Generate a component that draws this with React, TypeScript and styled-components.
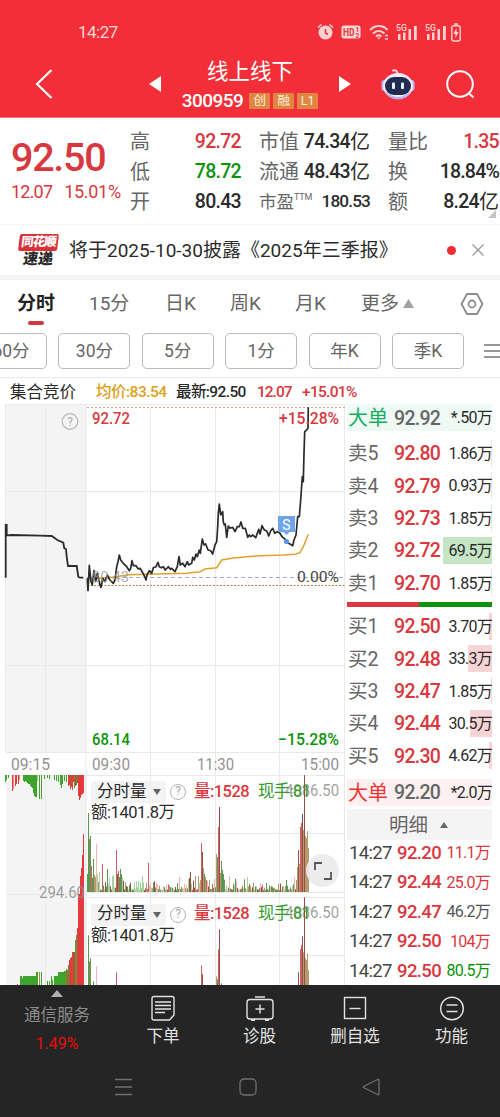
import React from 'react';
import styled, { createGlobalStyle } from 'styled-components';

const RED = '#d8383e';
const GREEN = '#0b930b';
const INK = '#2b2b2b';
const GREY = '#666';
const SANS = 'Roboto, "Noto Sans CJK SC", sans-serif';

const Global = createGlobalStyle`
  * { box-sizing: border-box; }
  html, body { margin: 0; padding: 0; background: #fff; }
  body { font-family: ${SANS}; color: ${INK}; width: 500px; overflow: hidden; }
`;

const T = styled.span<{ $s?: number; $c?: string; $w?: number; $ls?: number }>`
  display: inline-block;
  white-space: nowrap;
  line-height: 1;
  font-size: ${(p) => p.$s ?? 20}px;
  color: ${(p) => p.$c ?? INK};
  font-weight: ${(p) => p.$w ?? 400};
  letter-spacing: ${(p) => p.$ls ?? 0}px;
`;

const Page = styled.main`
  width: 500px;
  height: 1117px;
  display: flex;
  flex-direction: column;
  overflow: hidden;
`;

/* ---------- header ---------- */
const Header = styled.header`
  height: 118px;
  flex: none;
  background: #f22f38;
  border-bottom: 1px solid #e9747a;
`;
const StatusBar = styled.div`
  height: 54px;
  padding: 10px 39px 0 78px;
  display: flex;
  align-items: center;
  justify-content: space-between;
`;
const TitleBar = styled.div`
  height: 63px;
  display: grid;
  grid-template-columns: 140px 30px 160px 30px 140px;
  align-items: center;
`;
const BackCell = styled.div`padding: 0 0 4px 35px; display: flex;`;
const ArrowCell = styled.div`display: flex; justify-content: center; padding-bottom: 3px;`;
const StockName = styled.div`
  display: flex;
  flex-direction: column;
  align-items: center;
  gap: 10px;
  padding-bottom: 1px;
`;
const CodeRow = styled.div`display: flex; align-items: center; gap: 3px; height: 16px;`;
const Code = styled(T)`margin-right: 3px;`;
const Badge = styled.span`
  width: 21px;
  height: 16px;
  border-radius: 1px;
  background: #df8742;
  color: #fff0dc;
  font-size: 12.5px;
  line-height: 16px;
  text-align: center;
`;
const Actions = styled.div`
  display: flex;
  align-items: center;
  gap: 30px;
  padding: 0 0 4px 21px;
`;

/* ---------- quote ---------- */
const Quote = styled.section`
  height: 107px;
  flex: none;
  display: grid;
  grid-template-columns: 130px 111px 18px 111px 18px 111px;
  border-bottom: 1px solid #f3f3f3;
  position: relative;
`;
const Main = styled.div`padding: 20px 0 0 11px;`;
const Changes = styled.div`display: flex; gap: 12px; margin-top: 5px;`;
const StatCol = styled.div`padding-top: 9px;`;
const Stat = styled.div`
  height: 30px;
  display: flex;
  align-items: center;
  justify-content: space-between;
`;
const Value = styled.span`display: flex; align-items: center;`;
const Sup = styled.sup`font-size: 9px; line-height: 1; vertical-align: 8px; letter-spacing: -0.2px;`;
const Corner = styled.i`
  position: absolute;
  right: 4px;
  bottom: 6px;
  border-left: 8px solid transparent;
  border-bottom: 8px solid #c4c4c4;
`;

/* ---------- news ---------- */
const News = styled.section`
  height: 55px;
  flex: none;
  display: flex;
  align-items: center;
  padding: 0 16px 0 17px;
  border-bottom: 5px solid #f4f4f4;
`;
const NewsLogo = styled.div`
  width: 42px;
  margin-right: 10px;
  display: flex;
  flex-direction: column;
  align-items: center;
`;
const LogoTop = styled.div`
  width: 39px;
  height: 17px;
  background: #dc3038;
  border-radius: 2px;
  transform: skewX(-7deg);
  color: #fff;
  font-size: 12.5px;
  font-weight: 900;
  line-height: 16px;
  text-align: center;
  letter-spacing: -1px;
`;
const LogoBottom = styled.div`
  font-size: 15px;
  font-weight: 900;
  line-height: 16px;
  transform: skewX(-7deg);
`;
const Dot = styled.i`width: 9px; height: 9px; border-radius: 50%; background: #ee2b30; margin: 0 16px 0 auto;`;

/* ---------- tabs ---------- */
const Tabs = styled.nav`
  height: 47px;
  flex: none;
  padding-left: 17px;
  display: grid;
  grid-template-columns: 72px 76px 65px 65px 66px 99px 24px;
  align-items: center;
`;
const Tab = styled.div<{ $on?: boolean }>`
  position: relative;
  display: flex;
  align-items: center;
  gap: 4px;
  font-size: 19px;
  line-height: 24px;
  font-weight: ${(p) => (p.$on ? 700 : 400)};
  color: ${(p) => (p.$on ? '#222' : '#666')};
  white-space: nowrap;
  &::after {
    content: '';
    display: ${(p) => (p.$on ? 'block' : 'none')};
    position: absolute;
    left: 11px;
    top: 29px;
    width: 16px;
    height: 4px;
    border-radius: 2px;
    background: #d2373d;
  }
`;
const Pills = styled.div`
  height: 51px;
  flex: none;
  display: flex;
  align-items: center;
  padding: 0 0 3px;
  gap: 11.4px;
  margin-left: -25px;
  border-bottom: 1px solid #e8e8e8;
`;
const Pill = styled.div`
  width: 72px;
  height: 36px;
  flex: none;
  border: 1px solid #b9b9b9;
  border-radius: 5px;
  color: #666;
  font-size: 17.5px;
  line-height: 35px;
  text-align: center;
`;
const MenuIcon = styled.svg`flex: none; margin-left: 8px;`;
const Info = styled.div`
  height: 26px;
  flex: none;
  padding: 4px 0 0 10px;
  display: grid;
  grid-template-columns: 86px 80px 81px 45px auto;
  align-items: center;
`;

/* ---------- body ---------- */
const Body = styled.section`
  height: 581px;
  flex: none;
  display: flex;
  overflow: hidden;
`;
const ChartArea = styled.div`position: relative; width: 345px; height: 581px; flex: none; overflow: hidden;`;
const VolumeHead = styled.div<{ $top: number }>`
  position: absolute;
  left: 91px;
  top: ${(p) => p.$top}px;
`;
const VolumeRow = styled.div`display: flex; align-items: center; height: 22px;`;
const Picker = styled.div`
  width: 75px;
  height: 22px;
  padding-left: 6px;
  display: flex;
  align-items: center;
  gap: 6px;
  background: rgba(242, 242, 242, .9);
  border-radius: 3px;
  margin-right: 4px;
`;
const Help = styled.i`
  width: 16px;
  height: 16px;
  border: 1.4px solid #b3b3b3;
  border-radius: 50%;
  color: #aaa;
  font: normal 12px/13px Roboto, sans-serif;
  text-align: center;
  margin-right: 8px;
`;
const Current = styled(T)`margin-left: 9px;`;
const Expand = styled.div`
  position: absolute;
  left: 306px;
  top: 450px;
  width: 33px;
  height: 33px;
  border-radius: 50%;
  background: rgba(235, 235, 235, .93);
  display: flex;
  align-items: center;
  justify-content: center;
`;

const Book = styled.aside`
  width: 147px;
  padding-left: 2px;
  display: flex;
  flex-direction: column;
`;
const BookRow = styled.div<{ $h: number; $bg?: string; $bar?: number; $barColor?: string }>`
  height: ${(p) => p.$h}px;
  flex: none;
  display: grid;
  grid-template-columns: 46px 48px 1fr;
  align-items: center;
  padding: 1.500px 0 0 1px;
  background: ${(p) =>
    p.$bar
      ? `linear-gradient(${p.$barColor}, ${p.$barColor}) right center / ${p.$bar}px 27px no-repeat`
      : p.$bg ?? 'transparent'};
`;
const Amount = styled(T)`justify-self: end;`;
const Side = styled.div<{ $top: number; $bottom: number }>`
  flex: none;
  padding: ${(p) => p.$top}px 0 ${(p) => p.$bottom}px;
`;
const Ratio = styled.div`
  height: 5px;
  flex: none;
  background: linear-gradient(90deg, #d8383e 49.5%, #0b930b 49.5%);
`;
const DetailHead = styled.div`
  height: 31px;
  flex: none;
  margin-top: 3px;
  padding: 2px 2px 0 0;
  background: #f4f4f4;
  display: flex;
  align-items: center;
  justify-content: center;
  gap: 12px;
`;
const Tick = styled.div`
  height: 29.5px;
  flex: none;
  display: grid;
  grid-template-columns: 48px 46px 1fr;
  align-items: center;
  padding: 0 2px 3px 2px;
`;

/* ---------- footer ---------- */
const Footer = styled.footer`height: 132px; flex: none; background: #252525; position: relative;`;
const Menu = styled.div`
  height: 74px;
  display: grid;
  grid-template-columns: 114px 98px 95px 96px 97px;
`;
const MenuItem = styled.div<{ $gap: number; $top: number }>`
  display: flex;
  flex-direction: column;
  align-items: center;
  padding-top: ${(p) => p.$top}px;
  gap: ${(p) => p.$gap}px;
`;
const SystemNav = styled.div`
  height: 54px;
  display: flex;
  justify-content: space-between;
  align-items: center;
  padding: 1px 120px 0 114px;
`;

const SignalIcon = () => (
  <svg width="22" height="18" viewBox="0 0 22 18" fill="#fbd3d2">
    <text x="0" y="7.500" fontSize="9" fontWeight="500" fontFamily="Roboto" textLength="11" lengthAdjust="spacingAndGlyphs">5G</text>
    <path d="M2 11h2.500v6H2zM7 9.500h2.500v7.500H7zM12.500 6H15v11h-2.500zM18 3h2.800v14H18z" />
  </svg>
);

const StatusIcons = styled.div`display: flex; align-items: center;`;
const Gap = styled.span<{ $w: number }>`width: ${(p) => p.$w}px;`;

const Status = () => (
  <StatusBar>
    <T $s={17} $c="#fcd5d4" $ls={-0.5}>14:27</T>
    <StatusIcons>
      <svg width="17" height="18" viewBox="0 0 17 18">
        <circle cx="8.500" cy="9.500" r="7" fill="#fbd3d2" />
        <path d="M1 4.500 4.500 1.500M16 4.500 12.500 1.500" stroke="#fbd3d2" strokeWidth="1.500" />
        <path d="M8.500 6v4l2.500 1.500" stroke="#f22f38" strokeWidth="1.500" fill="none" />
      </svg>
      <Gap $w={7} />
      <svg width="20" height="14" viewBox="0 0 20 14">
        <rect x=".5" y=".5" width="19" height="13" rx="2" fill="#fbd3d2" />
        <text x="2" y="11" fontSize="10.500" fontWeight="700" fill="#e93840" fontFamily="Roboto" textLength="11.500" lengthAdjust="spacingAndGlyphs">HD</text>
        <text x="14.500" y="6.800" fontSize="6.500" fontWeight="700" fill="#e93840" fontFamily="Roboto">1</text>
        <text x="14.500" y="12.500" fontSize="6.500" fontWeight="700" fill="#e93840" fontFamily="Roboto">2</text>
      </svg>
      <Gap $w={8} />
      <svg width="20" height="17" viewBox="0 0 20 17" fill="none" stroke="#fbd3d2" strokeWidth="2">
        <path d="M1 6C6 .5 14 .5 18.500 6M4 9.500c3.500-3.500 8-3.500 11.500 0M7 12.500c2-1.700 3.500-1.700 5.500 0" />
        <path d="m8 13.500 1.800 2 1.800-2z" fill="#fbd3d2" stroke="none" />
        <path d="M16 11.500h3M16 15h3" strokeWidth="1.500" />
      </svg>
      <Gap $w={7} /><SignalIcon /><Gap $w={7} /><SignalIcon /><Gap $w={4} />
      <svg width="10" height="19" viewBox="0 0 10 19" fill="none" stroke="#fbd3d2" strokeWidth="1.400">
        <path d="M3 1h4" /><rect x=".8" y="2.800" width="8.400" height="15.200" rx="2" />
        <path d="M5.500 5 2.500 11h2v4l3-6h-2z" fill="#fbd3d2" stroke="none" />
      </svg>
    </StatusIcons>
  </StatusBar>
);

const Robot = () => (
  <svg width="34" height="32" viewBox="0 0 34 32">
    <path d="M12 2.500q4-1 4.500 3" stroke="#f6d7ef" strokeWidth="2" fill="none" strokeLinecap="round" />
    <rect x="0.500" y="12" width="6" height="11" rx="3" fill="#b8b6f2" />
    <rect x="27.500" y="12" width="6" height="11" rx="3" fill="#b8b6f2" />
    <ellipse cx="17" cy="18" rx="15" ry="13" fill="#eeeaff" />
    <path d="M4 23q13 12 26 0-4 8.500-13 8.500T4 23" fill="#b9aff2" />
    <rect x="4" y="9" width="26" height="18" rx="9" fill="#202d50" />
    <rect x="11" y="14.500" width="3" height="6.500" rx="1" fill="#e6f3ff" />
    <rect x="20" y="14.500" width="3" height="6.500" rx="1" fill="#e6f3ff" />
  </svg>
);

/* ---------- chart data ---------- */
type P = [number, number];
const line = (pts: P[]) => pts.map(([x, y]) => `${(x / 3).toFixed(1)},${(400 + y / 3).toFixed(1)}`).join(' ');

const auction: P[] = [[17, 533], [17, 375], [20, 375], [20, 406], [35, 405], [120, 407], [155, 408], [165, 415], [172, 420], [190, 428], [193, 445], [198, 447], [200, 470], [204, 498], [230, 498], [235, 530], [240, 533], [250, 533]];
const price: P[] = [[262, 535], [264, 572], [268, 496], [273, 545], [277, 555], [282, 512], [287, 545], [292, 520], [300, 555], [303, 562], [308, 535], [315, 545], [322, 525], [330, 540], [340, 550], [345, 540], [350, 500], [354, 485], [358, 465], [362, 480], [370, 490], [380, 500], [388, 512], [392, 505], [396, 482], [400, 497], [408, 497], [415, 507], [420, 505], [428, 518], [434, 530], [438, 540], [441, 525], [448, 512], [455, 520], [460, 503], [468, 500], [474, 487], [478, 500], [484, 503], [490, 500], [496, 510], [505, 500], [511, 508], [515, 505], [525, 515], [532, 500], [537, 470], [541, 495], [548, 490], [555, 500], [562, 485], [566, 495], [575, 490], [578, 472], [583, 480], [588, 462], [592, 470], [598, 450], [601, 460], [607, 417], [612, 435], [617, 432], [624, 450], [632, 452], [638, 462], [645, 435], [650, 425], [653, 380], [655, 340], [658, 312], [662, 345], [668, 335], [670, 365], [673, 375], [676, 372], [680, 412], [685, 378], [690, 385], [698, 382], [705, 395], [712, 380], [718, 380], [723, 366], [728, 385], [736, 385], [743, 412], [748, 405], [752, 410], [758, 405], [767, 413], [776, 388], [780, 402], [786, 377], [793, 390], [800, 393], [806, 408], [812, 392], [818, 385], [824, 400], [832, 395], [840, 400], [846, 410], [858, 420], [866, 430], [878, 437], [882, 420], [888, 405], [893, 350], [898, 350], [902, 300], [907, 230], [910, 245], [912, 160], [914, 95], [918, 92], [924, 85], [925, 22]];
const average: P[] = [[265, 537], [300, 535], [350, 530], [385, 524], [500, 521], [560, 520], [600, 515], [615, 507], [650, 503], [665, 480], [700, 474], [780, 467], [850, 465], [885, 463], [900, 458], [910, 440], [925, 403]];

const R = '#c96363', G = '#519a50', O = '#719052', B = '#b69a6c', K = '#f3b4ae', L = '#a2d5a0', D = '#934f45';
type Bar = [number, number, string];
const spikes: Bar[] = [[87.5, 18, G], [88.5, 79, G], [89.5, 53, O], [90.5, 56, O], [91.5, 26, R], [92.5, 14, O], [93.5, 33, G], [94.5, 17, B], [95.5, 15, B], [96.5, 48, K], [97.5, 18, L], [98.5, 10, B], [99.5, 20, L], [102.5, 28, R], [107.5, 23, G], [112.5, 16, L], [116.5, 42, R], [117.5, 18, D], [118.5, 21, R], [119.5, 15, G], [120.5, 23, G], [121.5, 18, G], [142.5, 16, L], [148.5, 29, R], [150.5, 9, K], [179.5, 15, K], [190.5, 20, D], [195.5, 16, B], [198.5, 16, B], [200.5, 12, B], [201.5, 49, R], [202.5, 40, D], [203.5, 24, B], [204.5, 18, G], [205.5, 15, B], [206.5, 12, R], [216.5, 38, B], [217.5, 35, O], [218.5, 65, R], [219.5, 85, D], [220.5, 19, B], [221.5, 31, O], [222.5, 22, G], [223.5, 18, G], [229.5, 16, K], [247.5, 15, L], [286.5, 12, G], [294.5, 15, K], [296.5, 12, B], [297.5, 25, B], [298.5, 42, D], [299.5, 28, B], [300.5, 65, R], [301.5, 69, R], [302.5, 78, D], [303.5, 62, B], [304.5, 117, D], [305.5, 56, B], [306.5, 54, B], [307.5, 61, B], [308.5, 44, B]];
const palette = [G, L, R, K, B, D, O, L];
const volume: Bar[] = (() => {
  const known = new Map(spikes.map((b) => [b[0], b]));
  const out: Bar[] = [];
  let seed = 31;
  for (let x = 87.5; x < 309; x += 1) {
    seed = (seed * 1103 + 12345) % 65521;
    const r = seed / 65521;
    const base = x < 125 ? 13 : x < 155 ? 9 : x < 188 ? 6 : x < 250 ? 10 : 6;
    out.push(known.get(x) ?? [x, 2 + r * r * base * 1.2, palette[seed % palette.length]]);
  }
  return out;
})();

const V = ({ base }: { base: number }) => (
  <g>{volume.map(([x, h, c]) => <rect key={x} x={x - 0.5} y={base - h} width="1" height={h} fill={c} />)}</g>
);

const AR = '#e33b3d', AG = '#3fa32c';
const hanging: Bar[] = [[5, 7, AG], [6, 5, AG], [8, 3, AG], [12, 16, AR], [13, 14, '#e88'], [15, 11, AR], [16, 9, AR], [18, 9, AR], [19, 5, '#e88'], [23, 6, AG], [24, 7, AG], [25, 6, AG], [26, 7, AG], [27, 8, AG], [28, 9, AG], [29, 9, AG], [30, 11, AG], [31, 12, AG], [32, 13, AG], [33, 18, AG], [34, 21, AG], [35, 22, AG], [36, 22, AG], [37, 6, '#9c9'], [39, 24, AG], [41, 24, AG], [44, 4, AG], [47, 3, AG], [49, 4, AG], [54, 5, AG], [56, 6, AG], [58, 7, AG], [60, 10, AG], [61, 13, AG], [62, 9, AG], [64, 6, AG], [66, 7, AG], [68, 11, AR], [69, 10, AR], [70, 14, AR], [71, 12, '#8a6b2f'], [72, 15, AR], [73, 7, AR], [74, 13, AG], [75, 11, AR], [76, 10, AG], [77, 8, AR], [78, 21, AR], [79, 25, AR], [80, 23, AR], [81, 20, AR], [82, 19, AR], [83, 18, AR]];
const rising: Bar[] = [[17, 1, AR], [20, 9, AG], [21, 9, AG], [22, 7, AG], [23, 9, AG], [24, 9, AG], [25, 9, AG], [26, 9, AG], [27, 9, AG], [28, 9, AG], [29, 9, AG], [30, 9, AG], [31, 9, AG], [32, 9, AG], [33, 9, AG], [34, 9, AG], [35, 9, AG], [36, 13, AG], [37, 13, AG], [39, 13, '#9a8a50'], [41, 13, AG], [47, 4, AG], [49, 4, AG], [51, 9, AG], [52, 5, AG], [54, 9, AG], [55, 9, AG], [56, 9, AG], [57, 9, AG], [58, 13, AG], [59, 13, AG], [60, 13, AG], [61, 13, AG], [62, 13, AG], [63, 13, AG], [64, 14, AG], [65, 14, AG], [66, 16, AG], [67, 15, AR], [68, 20, AG], [69, 25, AR], [70, 27, AR], [71, 28, AR], [72, 33, AR], [73, 33, '#98602c'], [74, 33, AR], [75, 45, AG], [76, 50, '#75913b'], [77, 57, AR], [78, 91, AR], [79, 91, AR], [80, 109, AR], [81, 117, AR], [82, 130, AR], [83, 151, AR]];

const Chart = () => (
  <svg width="345" height="581" viewBox="0 404 345 581" fontFamily={SANS}>
    <rect x="6" y="404" width="80.500" height="348" fill="#f4f4f4" />
    <rect x="6" y="775" width="80.500" height="210" fill="#f4f4f4" />
    <g stroke="#e9e9e9" fill="none">
      <path d="M6 404.500H345M6 491.500H345M6 665.500H345M6 752.500H345M5.500 404V752M45.500 404V752M86 404V985M150.500 404V985M215.500 404V985M279.500 404V985M344.500 404V985" />
      <path d="M6 775.500H345M87 833.500H345M6 894.500H86M87 892.500H345M87 897.500H345M87 955.500H345M45.500 775V985" />
    </g>
    <path d="M87 407.500H345" stroke="#dda38a" strokeDasharray="2 2" />
    <path d="M87 577.500H345" stroke="#aaa" strokeDasharray="4 3" />
    <path d="M87 585.500H345" stroke="#c07a3a" strokeDasharray="2 1.500" />
    <text x="297" y="581.500" fontSize="15.500" fill="#444" textLength="42" lengthAdjust="spacingAndGlyphs">0.00%</text>
    <polyline points={line(auction)} fill="none" stroke="#2b2b2b" strokeWidth="1.800" />
    <polyline points={line(average)} fill="none" stroke="#dda32b" strokeWidth="1.500" />
    <polyline points={line(price)} fill="none" stroke="#2b2b2b" strokeWidth="1.700" strokeLinejoin="round" />
    <text x="92" y="582" fontSize="15.500" fill="#999" fillOpacity=".8" textLength="37" lengthAdjust="spacingAndGlyphs">80.43</text>
    <circle cx="286.500" cy="541.500" r="2.600" fill="#5b94e8" />
    <path d="M278 516h17v16h-5.500l-3 3-3-3H278z" fill="#70a4ea" />
    <text x="286.500" y="529.500" fontSize="14" fill="#fff" textAnchor="middle">S</text>
    <circle cx="70" cy="421.500" r="7.800" fill="none" stroke="#b9b9b9" strokeWidth="1.200" />
    <text x="70" y="426" fontSize="12" fill="#aaa" textAnchor="middle">?</text>
    <g fontSize="16.500" fontWeight="500">
      <text x="92" y="424" fill={RED} textLength="38" lengthAdjust="spacingAndGlyphs">92.72</text>
      <text x="279" y="424" fill={RED} textLength="60" lengthAdjust="spacingAndGlyphs">+15.28%</text>
      <text x="92" y="744.500" fill={GREEN} textLength="38" lengthAdjust="spacingAndGlyphs">68.14</text>
      <text x="278" y="744.500" fill={GREEN} textLength="61" lengthAdjust="spacingAndGlyphs">−15.28%</text>
    </g>
    <g fontSize="16.500" fill="#929292">
      <text x="11" y="770" textLength="39" lengthAdjust="spacingAndGlyphs">09:15</text>
      <text x="92" y="770" textLength="38" lengthAdjust="spacingAndGlyphs">09:30</text>
      <text x="197" y="770" textLength="37" lengthAdjust="spacingAndGlyphs">11:30</text>
      <text x="301" y="770" textLength="38" lengthAdjust="spacingAndGlyphs">15:00</text>
      <text x="285" y="795.500" textLength="54" lengthAdjust="spacingAndGlyphs" fill="#a3a3a3">4086.50</text>
      <text x="285" y="918" textLength="54" lengthAdjust="spacingAndGlyphs" fill="#a3a3a3">4086.50</text>
    </g>
    {hanging.map(([x, h, c]) => <rect key={x} x={x} y="775" width="1" height={h} fill={c} />)}
    {rising.map(([x, h, c]) => <rect key={x} x={x} y={985 - h} width="1" height={h} fill={c} />)}
    <text x="39" y="898" fontSize="16.500" fill="#929292" fillOpacity=".9" textLength="46" lengthAdjust="spacingAndGlyphs">294.60</text>
    <V base={892} />
    <V base={1014.300} />
  </svg>
);

const VolumeLabel = ({ top }: { top: number }) => (
  <VolumeHead $top={top}>
    <VolumeRow>
      <Picker>
        <T $s={16.5}>分时量</T>
        <svg width="8" height="6" viewBox="0 0 8 6"><path d="M0 0h8L4 6z" fill="#666" /></svg>
      </Picker>
      <Help>?</Help>
      <T $s={16.5} $c={RED} $w={500} $ls={-0.55}>量:1528</T>
      <Current $s={16.5} $c="#349b2d" $ls={-0.7}>现手:81</Current>
    </VolumeRow>
    <T $s={16.5} $ls={-0.45}>额:1401.8万</T>
  </VolumeHead>
);

type Level = [string, string, string, number, string];
const sells: Level[] = [['卖5', '92.80', '1.86万', 1, '#dcebdc'], ['卖4', '92.79', '0.93万', 1, '#dcebdc'], ['卖3', '92.73', '1.85万', 1, '#dcebdc'], ['卖2', '92.72', '69.5万', 49, '#c5e5c5'], ['卖1', '92.70', '1.85万', 1, '#dcebdc']];
const buys: Level[] = [['买1', '92.50', '3.70万', 3, '#f9d4d6'], ['买2', '92.48', '33.3万', 24, '#f9d4d6'], ['买3', '92.47', '1.85万', 1, '#f9d4d6'], ['买4', '92.44', '30.5万', 22, '#f9d4d6'], ['买5', '92.30', '4.62万', 3, '#f9d4d6']];
const ticks = [['92.20', '11.1万', RED], ['92.44', '25.0万', RED], ['92.47', '46.2万', '#555'], ['92.50', '104万', RED], ['92.50', '80.5万', GREEN]];

const Levels = ({ rows }: { rows: Level[] }) => (
  <>
    {rows.map(([n, p, a, w, c]) => (
      <BookRow key={n} $h={32.4} $bar={w} $barColor={c}>
        <T $s={19.5} $c={GREY}>{n}</T>
        <T $s={19.5} $c={RED} $w={500} $ls={-0.7}>{p}</T>
        <Amount $s={16} $ls={-0.75}>{a}</Amount>
      </BookRow>
    ))}
  </>
);

const num = { $s: 19.5, $w: 500, $ls: -0.7 };

export default function App() {
  return (
    <Page>
      <Global />
      <Header>
        <Status />
        <TitleBar>
          <BackCell>
            <svg width="18" height="30" viewBox="0 0 18 30"><path d="M16.500 1 2 15l14.500 14" fill="none" stroke="#fff" strokeWidth="2.200" /></svg>
          </BackCell>
          <ArrowCell><svg width="12" height="18" viewBox="0 0 12 18"><path d="M12 1v16L0 9z" fill="#fff" /></svg></ArrowCell>
          <StockName>
            <T $s={21.5} $c="#fff">线上线下</T>
            <CodeRow>
              <Code $s={19} $c="#fff" $w={500} $ls={-0.55}>300959</Code>
              <Badge>创</Badge><Badge>融</Badge><Badge>L1</Badge>
            </CodeRow>
          </StockName>
          <ArrowCell><svg width="12" height="18" viewBox="0 0 12 18"><path d="M0 1v16l12-8z" fill="#fff" /></svg></ArrowCell>
          <Actions>
            <Robot />
            <svg width="30" height="30" viewBox="0 0 30 30" fill="none" stroke="#fff" strokeWidth="2"><circle cx="15" cy="15" r="12.800" /><path d="m23.500 24 5 4.500" /></svg>
          </Actions>
        </TitleBar>
      </Header>

      <Quote>
        <Main>
          <T $s={39.5} $c={RED} $w={500} $ls={-1.3}>92.50</T>
          <Changes>
            <T $s={18} $c={RED} $ls={-0.8}>12.07</T>
            <T $s={18} $c={RED} $ls={-0.3}>15.01%</T>
          </Changes>
        </Main>
        <StatCol>
          <Stat><T $c={GREY}>高</T><T {...num} $c={RED}>92.72</T></Stat>
          <Stat><T $c={GREY}>低</T><T {...num} $c={GREEN}>78.72</T></Stat>
          <Stat><T $c={GREY}>开</T><T {...num}>80.43</T></Stat>
        </StatCol>
        <span />
        <StatCol>
          <Stat><T $c={GREY}>市值</T><Value><T {...num}>74.34</T><T $s={20}>亿</T></Value></Stat>
          <Stat><T $c={GREY}>流通</T><Value><T {...num}>48.43</T><T $s={20}>亿</T></Value></Stat>
          <Stat><T $s={17.5} $c={GREY}>市盈<Sup>TTM</Sup></T><T $s={17.2} $w={500} $ls={-0.85}>180.53</T></Stat>
        </StatCol>
        <span />
        <StatCol>
          <Stat><T $c={GREY}>量比</T><T {...num} $c={RED}>1.35</T></Stat>
          <Stat><T $c={GREY}>换</T><T {...num} $ls={-0.8}>18.84%</T></Stat>
          <Stat><T $c={GREY}>额</T><Value><T {...num}>8.24</T><T $s={20}>亿</T></Value></Stat>
        </StatCol>
        <Corner />
      </Quote>

      <News>
        <NewsLogo><LogoTop>同花顺</LogoTop><LogoBottom>速递</LogoBottom></NewsLogo>
        <T $s={19}>将于2025-10-30披露《2025年三季报》</T>
        <Dot />
        <svg width="12" height="12" viewBox="0 0 12 12" stroke="#999" strokeWidth="1.300"><path d="m.5.5 11 11m0-11-11 11" /></svg>
      </News>

      <Tabs>
        <Tab $on>分时</Tab>
        <Tab>15分</Tab>
        <Tab>日K</Tab>
        <Tab>周K</Tab>
        <Tab>月K</Tab>
        <Tab>更多<svg width="11" height="9" viewBox="0 0 11 9"><path d="M5.500 0 11 9H0z" fill="#a0a0a0" /></svg></Tab>
        <svg width="24" height="22" viewBox="0 0 24 22" fill="none" stroke="#8c8c8c" strokeWidth="1.800"><path d="M7 1h10l5.500 10L17 21H7L1.500 11z" strokeLinejoin="round" /><circle cx="12" cy="11" r="3.500" /></svg>
      </Tabs>
      <Pills>
        {['60分', '30分', '5分', '1分', '年K', '季K'].map((p) => <Pill key={p}>{p}</Pill>)}
        <MenuIcon width="17" height="14" viewBox="0 0 17 14" stroke="#777" strokeWidth="1.400"><path d="M1 1h16M1 7h16M1 13h16" /></MenuIcon>
      </Pills>
      <Info>
        <T $s={16.5}>集合竞价</T>
        <T $s={15.5} $c="#dda018" $w={500} $ls={-0.5}>均价:83.54</T>
        <T $s={15.5} $w={500} $ls={-0.6}>最新:92.50</T>
        <T $s={15.5} $c={RED} $w={500} $ls={-1}>12.07</T>
        <T $s={15.5} $c={RED} $w={500} $ls={-0.7}>+15.01%</T>
      </Info>

      <Body>
        <ChartArea>
          <Chart />
          <VolumeLabel top={377} />
          <VolumeLabel top={499.5} />
          <Expand>
            <svg width="18" height="18" viewBox="0 0 18 18" fill="none" stroke="#555" strokeWidth="1.800"><path d="M1 8V1h7M17 10v7h-7" /></svg>
          </Expand>
        </ChartArea>
        <Book>
          <BookRow $h={27} $bg="#f0faf5">
            <T $s={20} $c="#13ae61">大单</T><T {...num} $c={GREY}>92.92</T><Amount $s={16} $ls={-0.75}>*.50万</Amount>
          </BookRow>
          <Side $top={6} $bottom={3}><Levels rows={sells} /></Side>
          <Ratio />
          <Side $top={3} $bottom={7}><Levels rows={buys} /></Side>
          <BookRow $h={27} $bg="#fdf0f0">
            <T $s={20} $c="#ee3434">大单</T><T {...num} $c={GREY}>92.20</T><Amount $s={16} $ls={-0.75}>*2.0万</Amount>
          </BookRow>
          <DetailHead>
            <T $s={19.5} $c={GREY}>明细</T>
            <svg width="8" height="6" viewBox="0 0 8 6"><path d="M4 0 8 6H0z" fill="#666" /></svg>
          </DetailHead>
          {ticks.map(([p, a, c], i) => (
            <Tick key={i}>
              <T $s={18.5} $c="#444" $ls={-0.65}>14:27</T>
              <T $s={18.5} $c={RED} $w={500} $ls={-0.6}>{p}</T>
              <Amount $s={16} $c={c} $ls={-0.75}>{a}</Amount>
            </Tick>
          ))}
        </Book>
      </Body>

      <Footer>
        <Menu>
          <MenuItem $top={5} $gap={11}>
            <svg width="12" height="7" viewBox="0 0 12 7"><path d="M6 0l6 7H0z" fill="#b0b0b0" /></svg>
            <T $s={16.5} $c="#8b8b8b">通信服务</T>
            <T $s={16} $c="#e80c0c">1.49%</T>
          </MenuItem>
          <MenuItem $top={10} $gap={8}>
            <svg width="24" height="26" viewBox="0 0 24 26" fill="none" stroke="#e2e2e2" strokeWidth="1.400"><path d="M3 1.500h18q2 0 2 2V20l-4.500 5H3q-2 0-2-2V3.500q0-2 2-2zM4 7h16M4 10.500h16M4 14h16M4 17.500h10" /></svg>
            <T $s={16.5} $c="#e2e2e2">下单</T>
          </MenuItem>
          <MenuItem $top={10} $gap={8}>
            <svg width="28" height="26" viewBox="0 0 28 26" fill="none" stroke="#e2e2e2" strokeWidth="1.400"><rect x="1" y="4.500" width="26" height="19.500" rx="3" /><path d="M9 2h10M9.500 14h9M14 9.500v9" /><path d="M5 25h4M19 25h4" strokeWidth="2" /></svg>
            <T $s={16.5} $c="#e2e2e2">诊股</T>
          </MenuItem>
          <MenuItem $top={10} $gap={8}>
            <svg width="24" height="26" viewBox="0 0 24 26" fill="none" stroke="#e2e2e2" strokeWidth="1.400"><rect x="1.500" y="2.500" width="21" height="21" /><path d="M6.500 13.500h11" /></svg>
            <T $s={16.5} $c="#e2e2e2">删自选</T>
          </MenuItem>
          <MenuItem $top={10} $gap={8}>
            <svg width="26" height="26" viewBox="0 0 26 26" fill="none" stroke="#e2e2e2" strokeWidth="1.400"><circle cx="13" cy="13.500" r="11.300" /><path d="M7.500 10h11M7.500 16.500h11" /></svg>
            <T $s={16.5} $c="#e2e2e2">功能</T>
          </MenuItem>
        </Menu>
        <SystemNav>
          <svg width="19" height="18" viewBox="0 0 19 18" stroke="#707070" strokeWidth="1.300"><path d="M1 1.500h17M1 9h17M1 16.500h17" /></svg>
          <svg width="18" height="18" viewBox="0 0 18 18" fill="none" stroke="#707070" strokeWidth="1.300"><rect x="1" y="1" width="16" height="16" rx="4" /></svg>
          <svg width="18" height="18" viewBox="0 0 18 18" fill="none" stroke="#707070" strokeWidth="1.300"><path d="M15.500 1.500q1.500-.8 1.500 1v13q0 1.800-1.500 1L1.500 9.500q-.8-.5 0-1z" /></svg>
        </SystemNav>
      </Footer>
    </Page>
  );
}
